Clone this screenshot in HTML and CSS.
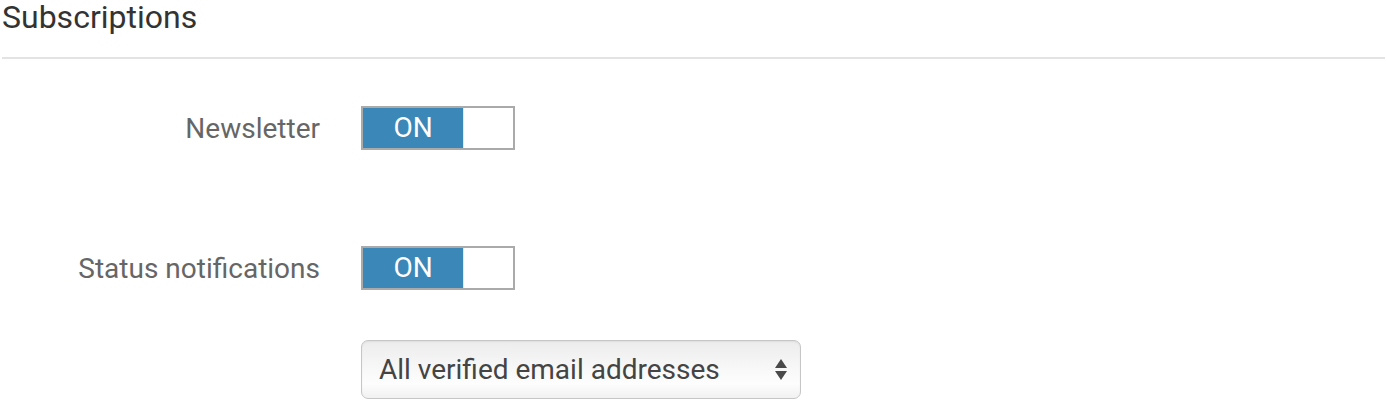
FILE: index.html
```html
<!DOCTYPE html>
<html lang="en">
<head>
    <meta charset="UTF-8">
    <title>Subscriptions</title>
    <link rel="stylesheet" href="styles.css">
</head>
<body>
    <section class="subscriptions">
        <h2 class="section-title">Subscriptions</h2>
        <div class="form-rows">
            <div class="form-row">
                <label class="row-label">Newsletter</label>
                <div class="toggle">
                    <span class="toggle-on">ON</span>
                    <span class="toggle-off"></span>
                </div>
            </div>
            <div class="form-row">
                <label class="row-label">Status notifications</label>
                <div class="toggle">
                    <span class="toggle-on">ON</span>
                    <span class="toggle-off"></span>
                </div>
            </div>
            <div class="form-row form-row-select">
                <span class="row-label"></span>
                <div class="select-box">
                    <span class="select-text">All verified email addresses</span>
                    <svg class="select-arrows" width="12" height="22" viewBox="0 0 12 22">
                        <path d="M6 0 L12 9 L0 9 Z" fill="#4a4a4a"/>
                        <path d="M0 12 L12 12 L6 21 Z" fill="#4a4a4a"/>
                    </svg>
                </div>
            </div>
        </div>
    </section>
</body>
</html>
```

FILE: styles.css
```css
:root {
    --text-color: #333333;
    --label-color: #666666;
    --rule-color: #e3e3e3;
    --toggle-border: #aaaaaa;
    --toggle-on: #3b87b8;
}

body {
    margin: 0;
    padding: 0;
    font-family: Roboto, 'Liberation Sans', sans-serif;
    background: #ffffff;
    color: var(--text-color);
}

.subscriptions {
    padding: 0 2px;
}

.section-title {
    margin: 0;
    height: 57px;
    line-height: 34px;
    font-size: 32px;
    font-weight: 400;
    color: var(--text-color);
    border-bottom: 2px solid var(--rule-color);
    box-sizing: content-box;
}

.form-rows {
    padding-top: 47px;
}

.form-row {
    display: grid;
    grid-template-columns: 318px 154px;
    column-gap: 41px;
    align-items: center;
    margin-bottom: 96px;
}

.form-row-select {
    grid-template-columns: 318px 440px;
    margin-bottom: 0;
    margin-top: -46px;
}

.row-label {
    text-align: right;
    font-size: 28px;
    color: var(--label-color);
}

.toggle {
    display: flex;
    width: 150px;
    height: 40px;
    border: 2px solid var(--toggle-border);
    background: #ffffff;
}

.toggle-on {
    width: 100px;
    background: var(--toggle-on);
    color: #ffffff;
    font-size: 28px;
    line-height: 40px;
    text-align: center;
}

.toggle-off {
    flex: 1;
    border-left: 1px solid #e6e6e6;
}

.select-box {
    display: flex;
    align-items: center;
    justify-content: space-between;
    height: 57px;
    padding: 0 13px 0 17px;
    border: 1px solid #c6c6c6;
    border-radius: 7px;
    background: linear-gradient(#ececec, #f7f7f7 45%, #fdfdfd 75%, #f1f1f1);
    box-shadow: inset 0 1px 2px rgba(0, 0, 0, 0.06);
}

.select-text {
    font-size: 28px;
    color: #444444;
}
```
